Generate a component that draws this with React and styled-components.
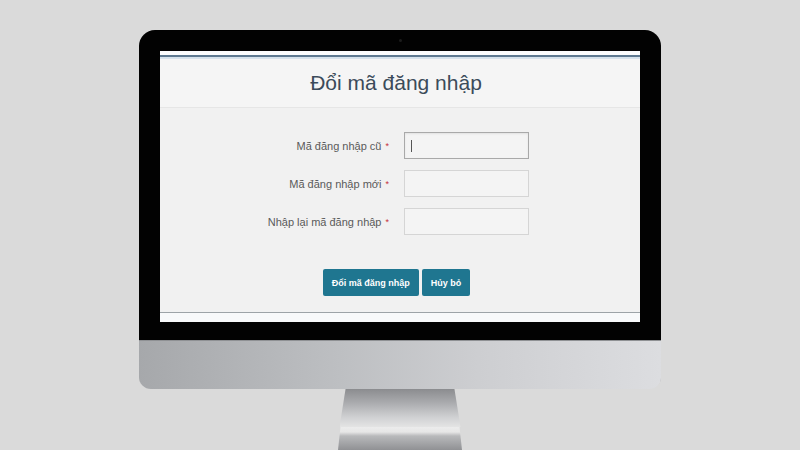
import React from 'react';
import styled, { createGlobalStyle } from 'styled-components';

const GlobalStyle = createGlobalStyle`
  html, body {
    margin: 0;
    padding: 0;
    background: #d9d9d9;
    font-family: "Liberation Sans", Arial, sans-serif;
  }
`;

const Page = styled.div`
  width: 800px;
  height: 450px;
  overflow: hidden;
  display: flex;
  flex-direction: column;
  align-items: center;
  background: #dadada;
`;

const Bezel = styled.div`
  margin-top: 30px;
  width: 522px;
  box-sizing: border-box;
  padding: 21px 21px 18px;
  background: #020202;
  border-radius: 16px 16px 0 0;
  display: flex;
  flex-direction: column;
  align-items: center;
`;

const Camera = styled.span`
  width: 3px;
  height: 3px;
  margin-top: -12px;
  margin-bottom: 9px;
  border-radius: 50%;
  background: #1c1c1c;
`;

const Screen = styled.div`
  width: 480px;
  height: 271px;
  display: flex;
  flex-direction: column;
  background: #f2f2f2;
`;

const TopStrip = styled.div`
  height: 4px;
  background: #fbfcfd;
  border-bottom: 2px solid #5d7890;
  box-shadow: 0 2px 0 #d6e2ec;
`;

const Header = styled.div`
  height: 48px;
  margin-top: 2px;
  display: flex;
  align-items: center;
  justify-content: center;
  background: #f5f5f5;
  border-bottom: 1px solid #e6e6e6;
`;

const Title = styled.h1`
  margin: 0 0 0 -8px;
  font-size: 21px;
  font-weight: 400;
  color: #3b4b5a;
`;

const Form = styled.div`
  flex: 1;
  display: flex;
  flex-direction: column;
  padding-top: 24px;
  background: #f1f1f1;
`;

const Fields = styled.div`
  display: grid;
  grid-template-columns: 229px 125px;
  column-gap: 15px;
  row-gap: 11px;
`;

const Label = styled.label`
  display: flex;
  align-items: center;
  justify-content: flex-end;
  gap: 4px;
  font-size: 11px;
  color: #5a5a5a;
`;

const Required = styled.span`
  color: #c62f3a;
  font-size: 9px;
`;

const Input = styled.div`
  height: 27px;
  box-sizing: border-box;
  background: #f4f4f4;
  border: 1px solid ${(p) => (p.$focused ? '#a9a9a9' : '#d5d5d5')};
  box-shadow: ${(p) => (p.$focused ? 'inset 0 1px 2px rgba(0,0,0,0.08)' : 'none')};
  display: flex;
  align-items: center;
  padding-left: 6px;
`;

const Caret = styled.span`
  width: 1px;
  height: 12px;
  background: #555;
`;

const Actions = styled.div`
  display: flex;
  justify-content: center;
  gap: 3px;
  margin-top: 34px;
  padding-right: 7px;
`;

const Button = styled.button`
  height: 27px;
  padding: 0 ${(p) => p.$pad}px;
  border: none;
  border-radius: 2px;
  background: #1f7690;
  color: #fff;
  font-family: "Liberation Sans", Arial, sans-serif;
  font-size: 9px;
  font-weight: 700;
`;

const Footer = styled.div`
  height: 9px;
  margin-top: auto;
  background: #f8f9fa;
  border-top: 1px solid #9da3a7;
`;

const Chin = styled.div`
  width: 522px;
  height: 49px;
  border-radius: 0 0 12px 12px;
  background: linear-gradient(to right, #a6a8ab 0%, #bbbdc0 35%, #cdced1 65%, #dcdde0 100%);
  box-shadow: inset 0 1px 0 #8f9194;
`;

const Neck = styled.div`
  width: 121px;
  height: 38px;
  clip-path: polygon(5% 0, 95% 0, 100% 100%, 0 100%);
  background: linear-gradient(to bottom, #8b8c8f 0%, #a9aaad 35%, #d0d1d3 75%, #e4e4e4 100%);
`;

const Foot = styled.div`
  width: 124px;
  height: 23px;
  clip-path: polygon(2% 0, 98% 0, 100% 100%, 0 100%);
  background: linear-gradient(to bottom, #ececec 0, #e6e6e6 5px, #b8b9bb 9px, #909194 100%);
`;

const fields = [
  { label: 'Mã đăng nhập cũ', focused: true },
  { label: 'Mã đăng nhập mới' },
  { label: 'Nhập lại mã đăng nhập' },
];

export default function App() {
  return (
    <Page>
      <GlobalStyle />
      <Bezel>
        <Camera />
        <Screen>
          <TopStrip />
          <Header>
            <Title>Đổi mã đăng nhập</Title>
          </Header>
          <Form>
            <Fields>
              {fields.map((f) => (
                <React.Fragment key={f.label}>
                  <Label>
                    {f.label} <Required>*</Required>
                  </Label>
                  <Input $focused={f.focused}>{f.focused && <Caret />}</Input>
                </React.Fragment>
              ))}
            </Fields>
            <Actions>
              <Button $pad={9}>Đổi mã đăng nhập</Button>
              <Button $pad={9}>Hủy bỏ</Button>
            </Actions>
            <Footer />
          </Form>
        </Screen>
      </Bezel>
      <Chin />
      <Neck />
      <Foot />
    </Page>
  );
}
